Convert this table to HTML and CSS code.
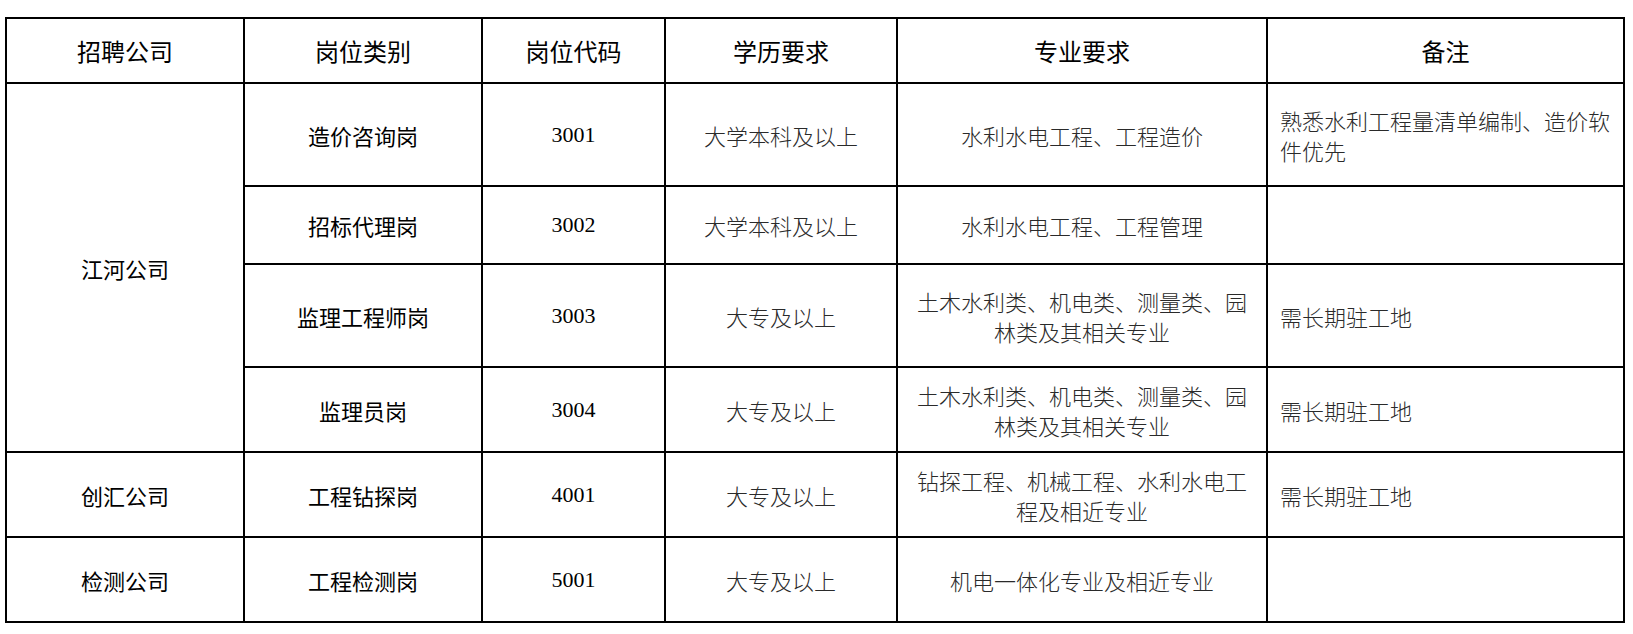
FILE: index.html
```html
<!DOCTYPE html>
<html lang="zh-CN">
<head>
<meta charset="utf-8">
<title>招聘岗位</title>
<link rel="stylesheet" href="styles.css">
</head>
<body>
<div class="page">
<table class="jobs">
  <colgroup>
    <col class="c1"><col class="c2"><col class="c3"><col class="c4"><col class="c5"><col class="c6">
  </colgroup>
  <thead>
    <tr class="head">
      <th>招聘公司</th><th>岗位类别</th><th>岗位代码</th><th>学历要求</th><th>专业要求</th><th>备注</th>
    </tr>
  </thead>
  <tbody>
    <tr class="r-tall">
      <td class="sans" rowspan="4">江河公司</td>
      <td class="sans">造价咨询岗</td>
      <td class="num">3001</td>
      <td class="song">大学本科及以上</td>
      <td class="song">水利水电工程、工程造价</td>
      <td class="song note">熟悉水利工程量清单编制、造价软件优先</td>
    </tr>
    <tr class="r-short">
      <td class="sans">招标代理岗</td>
      <td class="num">3002</td>
      <td class="song">大学本科及以上</td>
      <td class="song">水利水电工程、工程管理</td>
      <td class="song note"></td>
    </tr>
    <tr class="r-tall">
      <td class="sans">监理工程师岗</td>
      <td class="num">3003</td>
      <td class="song">大专及以上</td>
      <td class="song">土木水利类、机电类、测量类、园林类及其相关专业</td>
      <td class="song note">需长期驻工地</td>
    </tr>
    <tr class="r-mid">
      <td class="sans">监理员岗</td>
      <td class="num">3004</td>
      <td class="song">大专及以上</td>
      <td class="song">土木水利类、机电类、测量类、园林类及其相关专业</td>
      <td class="song note">需长期驻工地</td>
    </tr>
    <tr class="r-mid">
      <td class="sans">创汇公司</td>
      <td class="sans">工程钻探岗</td>
      <td class="num">4001</td>
      <td class="song">大专及以上</td>
      <td class="song">钻探工程、机械工程、水利水电工程及相近专业</td>
      <td class="song note">需长期驻工地</td>
    </tr>
    <tr class="r-mid">
      <td class="sans">检测公司</td>
      <td class="sans">工程检测岗</td>
      <td class="num">5001</td>
      <td class="song">大专及以上</td>
      <td class="song">机电一体化专业及相近专业</td>
      <td class="song note"></td>
    </tr>
  </tbody>
</table>
</div>
</body>
</html>
```

FILE: styles.css
```css
html, body {
  margin: 0;
  padding: 0;
  background: #fff;
}

.page {
  padding: 17px 0 0 5px;
}

.jobs {
  border-collapse: collapse;
  table-layout: fixed;
  width: 1618px;
  color: #000;
}

.c1 { width: 238px; }
.c2 { width: 238px; }
.c3 { width: 183px; }
.c4 { width: 232px; }
.c5 { width: 370px; }
.c6 { width: 357px; }

.jobs th,
.jobs td {
  border: 2px solid #000;
  text-align: center;
  vertical-align: middle;
  padding: 0 12px;
}

.jobs th {
  font-family: "Noto Sans CJK SC", "Noto Sans", sans-serif;
  font-weight: 400;
  font-size: 24px;
  line-height: 30px;
}

.head { height: 65px; }
.r-tall { height: 103px; }
.r-short { height: 78px; }
.r-mid { height: 85px; }

.sans {
  font-family: "Noto Sans CJK SC", "Noto Sans", sans-serif;
  font-size: 22px;
  line-height: 30px;
}

.num {
  font-family: "Liberation Serif", serif;
  font-size: 22px;
  line-height: 30px;
}

.song {
  font-family: "Noto Sans CJK SC", sans-serif;
  font-weight: 300;
  font-size: 22px;
  line-height: 30px;
  color: #2a2a2a;
}

.jobs td.note {
  text-align: left;
}
```
